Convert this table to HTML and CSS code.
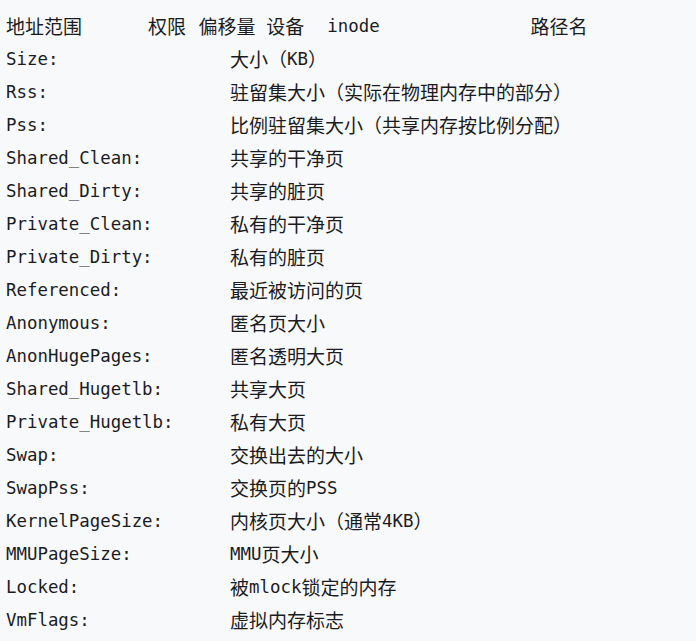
FILE: index.html
```html
<!DOCTYPE html>
<html lang="zh-CN">
<head>
<meta charset="utf-8">
<title>smaps</title>
<link rel="stylesheet" href="styles.css">
</head>
<body>
<div class="code">
  <div class="head">
    <span class="zh h-addr">地址范围</span>
    <span class="zh h-perm">权限</span>
    <span class="zh h-off">偏移量</span>
    <span class="zh h-dev">设备</span>
    <span class="h-inode">inode</span>
    <span class="zh h-path">路径名</span>
  </div>
  <div class="rows">
    <div class="k">Size:</div><div class="v"><span class="zh">大小（</span>KB<span class="zh">）</span></div>
    <div class="k">Rss:</div><div class="v"><span class="zh">驻留集大小（实际在物理内存中的部分）</span></div>
    <div class="k">Pss:</div><div class="v"><span class="zh">比例驻留集大小（共享内存按比例分配）</span></div>
    <div class="k">Shared_Clean:</div><div class="v"><span class="zh">共享的干净页</span></div>
    <div class="k">Shared_Dirty:</div><div class="v"><span class="zh">共享的脏页</span></div>
    <div class="k">Private_Clean:</div><div class="v"><span class="zh">私有的干净页</span></div>
    <div class="k">Private_Dirty:</div><div class="v"><span class="zh">私有的脏页</span></div>
    <div class="k">Referenced:</div><div class="v"><span class="zh">最近被访问的页</span></div>
    <div class="k">Anonymous:</div><div class="v"><span class="zh">匿名页大小</span></div>
    <div class="k">AnonHugePages:</div><div class="v"><span class="zh">匿名透明大页</span></div>
    <div class="k">Shared_Hugetlb:</div><div class="v"><span class="zh">共享大页</span></div>
    <div class="k">Private_Hugetlb:</div><div class="v"><span class="zh">私有大页</span></div>
    <div class="k">Swap:</div><div class="v"><span class="zh">交换出去的大小</span></div>
    <div class="k">SwapPss:</div><div class="v"><span class="zh">交换页的</span>PSS</div>
    <div class="k">KernelPageSize:</div><div class="v"><span class="zh">内核页大小（通常</span>4KB<span class="zh">）</span></div>
    <div class="k">MMUPageSize:</div><div class="v">MMU<span class="zh">页大小</span></div>
    <div class="k">Locked:</div><div class="v"><span class="zh">被</span>mlock<span class="zh">锁定的内存</span></div>
    <div class="k">VmFlags:</div><div class="v"><span class="zh">虚拟内存标志</span></div>
  </div>
</div>
</body>
</html>
```

FILE: styles.css
```css
html, body {
  margin: 0;
  padding: 0;
  background: #f8f9fb;
}

.code {
  padding: 9px 5px 0 6px;
  font-family: "DejaVu Sans Mono", "Noto Sans CJK SC", monospace;
  font-size: 17.4px;
  color: #1b1c1f;
}

.zh {
  font-family: "Noto Sans CJK SC", sans-serif;
  font-size: 19px;
}

.head {
  display: flex;
  align-items: center;
  height: 33px;
}

.h-perm { margin-left: 66px; }
.h-off { margin-left: 12.5px; }
.h-dev { margin-left: 10.7px; }
.h-inode { margin-left: 23px; }
.h-path { margin-left: 151px; }

.rows {
  display: grid;
  grid-template-columns: 224px 1fr;
  grid-auto-rows: 33px;
  align-items: center;
}

.k, .v {
  display: flex;
  align-items: center;
  height: 33px;
  white-space: pre;
}
```
